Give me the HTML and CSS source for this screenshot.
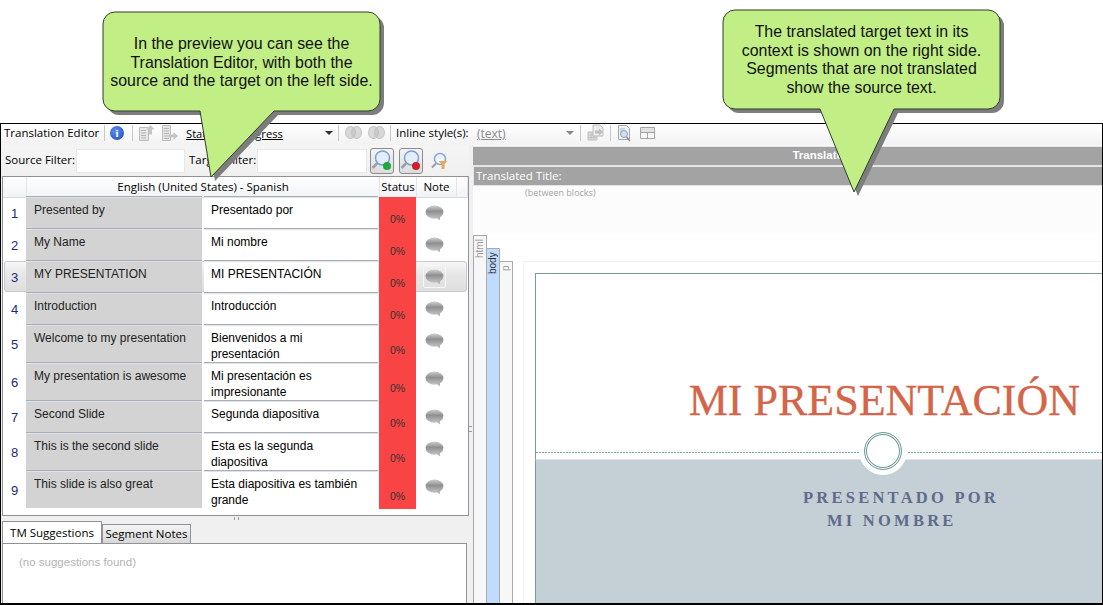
FILE: index.html
```html
<!doctype html>
<html lang="en">
<head>
<meta charset="UTF-8">
<title>Translation Editor</title>
<link rel="stylesheet" href="styles.css">
</head>
<body>
<svg class="defs" width="0" height="0">
 <defs>
  <linearGradient id="bubble" x1="0" y1="0" x2="0" y2="1">
   <stop offset="0" stop-color="#cfcfcf"/><stop offset="0.45" stop-color="#8f8f8f"/><stop offset="1" stop-color="#c4c4c4"/>
  </linearGradient>
  <symbol id="note" viewBox="0 0 20 17">
   <ellipse cx="10" cy="7.500" rx="9.500" ry="7" fill="url(#bubble)"/>
   <path d="M12 13l3.500 3.500.5-5z" fill="#b0b0b0"/>
  </symbol>
  <symbol id="docup" viewBox="0 0 17 17">
   <path d="M1.500 3.500h9v13h-9z" fill="#e6e6e6" stroke="#bcbcbc"/>
   <path d="M3 6.500h5M3 9h5M3 11.500h5M3 14h5" stroke="#b5b5b5"/>
   <path d="M12.500 1l4 4.500h-2.500v5h-3v-5H8.500z" fill="#c6c6c6"/>
  </symbol>
  <symbol id="docright" viewBox="0 0 17 17">
   <path d="M1.500 1.500h8v15h-8z" fill="#e6e6e6" stroke="#bcbcbc"/>
   <path d="M3 4.500h5M3 7h5M3 9.500h5M3 12h5M3 14.500h5" stroke="#b5b5b5"/>
   <path d="M17 12l-4.500 4v-2.500H8v-3h4.500V8z" fill="#c6c6c6"/>
  </symbol>
  <symbol id="lens" viewBox="0 0 24 25">
   <circle cx="12.500" cy="10" r="7" fill="#e4eefb" stroke="#7a9fd8" stroke-width="1.500"/>
   <path d="M7.500 15l-5 5" stroke="#9a9ea6" stroke-width="2.500"/>
  </symbol>
 </defs>
</svg>

<div class="stage">
 <div class="app">

  <div class="toolbar">
   <span class="tb-title">Translation Editor</span>
   <i class="sep"></i>
   <span class="info">i</span>
   <i class="sep"></i>
   <svg class="ic"><use href="#docup"/></svg>
   <svg class="ic ic-b"><use href="#docright"/></svg>
   <span class="status-pick">Status: In Progress</span>
   <i class="caret caret-a"></i>
   <i class="sep"></i>
   <span class="rings"><b></b><b></b></span>
   <span class="rings"><b></b><b></b></span>
   <i class="sep sep-r"></i>
   <span class="tb-label">Inline style(s):</span>
   <span class="style-pick">(text)</span>
   <i class="caret caret-b"></i>
   <i class="sep"></i>
   <svg class="ic ic-c" viewBox="0 0 17 17"><path d="M1 8h9v8H1zM1 11h9M1 13.500h9M4 8v8M7 8v8" fill="#dcdcdc" stroke="#c2c2c2"/><path d="M6 1h7l3 3v8H6z" fill="#ececec" stroke="#bcbcbc"/><path d="M16 8l-4 3.500V9.500H8v-3h4V4.500z" fill="#bdbdbd"/></svg>
   <i class="sep"></i>
   <svg class="ic ic-d" viewBox="0 0 15 18"><path d="M1.500 1.500h8l3 3v11h-11z" fill="#f0f4f8" stroke="#a8a8a8"/><path d="M3 5h5M3 7h2" stroke="#9fb8d0"/><circle cx="7" cy="10" r="3.500" fill="#cfe0f0" stroke="#8aa0b8"/><path d="M9.500 13l3.500 4" stroke="#8a8a8a" stroke-width="1.500"/></svg>
   <svg class="ic ic-e" viewBox="0 0 15 12"><path d="M.5.500h14v11H.5zM.5 5.500h14M7.500 5.500v6" fill="#f6f6f6" stroke="#a4a4a4"/><path d="M1 1h13v4H1z" fill="#e2e2e2"/></svg>
  </div>

  <div class="panes">
   <div class="left">
    <div class="filters">
     <label class="f-label">Source Filter:</label>
     <input class="f-input" type="text">
     <label class="f-label f-target">Target Filter:</label>
     <input class="f-input f-input-b" type="text">
     <span class="f-btn"><svg width="24" height="25"><use href="#lens"/></svg><i class="dot dot-green"></i></span>
     <span class="f-btn f-btn-b"><svg width="24" height="25"><use href="#lens"/></svg><i class="dot dot-red"></i></span>
     <svg class="f-funnel" width="17" height="17" viewBox="0 0 17 17"><circle cx="9" cy="7" r="5.500" fill="#eef4fc" stroke="#86a8dc" stroke-width="1.500"/><path d="M5 11.500l-4 4" stroke="#9a9ea6" stroke-width="2"/><path d="M7.500 9h9l-3 3v5h-3v-5z" fill="#e8a85a"/></svg>
    </div>

    <div class="grid">
     <div class="row head">
      <span class="h-num"></span>
      <span class="h-lang">English (United States) - Spanish</span>
      <span class="h-status">Status</span>
      <span class="h-note">Note</span>
      <span class="h-end"></span>
     </div>
     <div class="row">
      <span class="num">1</span><span class="src">Presented by</span><span class="tgt">Presentado por</span>
      <span class="stat">0%</span><span class="nt"><svg><use href="#note"/></svg></span>
     </div>
     <div class="row">
      <span class="num">2</span><span class="src">My Name</span><span class="tgt">Mi nombre</span>
      <span class="stat">0%</span><span class="nt"><svg><use href="#note"/></svg></span>
     </div>
     <div class="row sel">
      <span class="num">3</span><span class="src">MY PRESENTATION</span><span class="tgt">MI PRESENTACIÓN</span>
      <span class="stat">0%</span><span class="nt"><svg><use href="#note"/></svg></span>
     </div>
     <div class="row">
      <span class="num">4</span><span class="src">Introduction</span><span class="tgt">Introducción</span>
      <span class="stat">0%</span><span class="nt"><svg><use href="#note"/></svg></span>
     </div>
     <div class="row tall">
      <span class="num">5</span><span class="src">Welcome to my presentation</span><span class="tgt">Bienvenidos a mi presentación</span>
      <span class="stat">0%</span><span class="nt"><svg><use href="#note"/></svg></span>
     </div>
     <div class="row tall">
      <span class="num">6</span><span class="src">My presentation is awesome</span><span class="tgt">Mi presentación es impresionante</span>
      <span class="stat">0%</span><span class="nt"><svg><use href="#note"/></svg></span>
     </div>
     <div class="row">
      <span class="num">7</span><span class="src">Second Slide</span><span class="tgt">Segunda diapositiva</span>
      <span class="stat">0%</span><span class="nt"><svg><use href="#note"/></svg></span>
     </div>
     <div class="row tall">
      <span class="num">8</span><span class="src">This is the second slide</span><span class="tgt">Esta es la segunda diapositiva</span>
      <span class="stat">0%</span><span class="nt"><svg><use href="#note"/></svg></span>
     </div>
     <div class="row tall">
      <span class="num">9</span><span class="src">This slide is also great</span><span class="tgt">Esta diapositiva es también grande</span>
      <span class="stat">0%</span><span class="nt"><svg><use href="#note"/></svg></span>
     </div>
    </div>

    <div class="hgrip"><i></i></div>

    <div class="tabs">
     <span class="tab on">TM Suggestions</span>
     <span class="tab">Segment Notes</span>
    </div>
    <div class="tabpanel">(no suggestions found)</div>
   </div>

   <div class="vgrip"><i></i></div>

   <div class="right">
    <div class="titlebar">Translated Title</div>
    <div class="titlefield">Translated Title:</div>
    <div class="between">(between blocks)</div>
    <div class="doc">
     <div class="crumb crumb-html"><span>html</span></div>
     <div class="crumb crumb-body"><span>body</span></div>
     <div class="crumb crumb-p"><span>p</span></div>
     <div class="page">
      <div class="slide">
       <div class="slide-top"><h1 class="slide-title">MI PRESENTACIÓN</h1></div>
       <div class="slide-rule"></div>
       <div class="slide-sub">
        <p class="sub-a">PRESENTADO POR</p>
        <p class="sub-b">MI NOMBRE</p>
       </div>
       <div class="badge"><i></i></div>
      </div>
     </div>
    </div>
   </div>
  </div>
 </div>

 <svg class="callouts" width="1103" height="605" viewBox="0 0 1103 605">
  <path class="c-shadow" d="M115 12H368a12 12 0 0 1 12 12V99a12 12 0 0 1-12 12H274L211 177 200 111H115a12 12 0 0 1-12-12V24a12 12 0 0 1 12-12z"/>
  <path class="c-fill" d="M115 12H368a12 12 0 0 1 12 12V99a12 12 0 0 1-12 12H274L211 177 200 111H115a12 12 0 0 1-12-12V24a12 12 0 0 1 12-12z"/>
  <path class="c-shadow" d="M735 10H988a12 12 0 0 1 12 12V97a12 12 0 0 1-12 12H894L854 192 820 109H735a12 12 0 0 1-12-12V22a12 12 0 0 1 12-12z"/>
  <path class="c-fill" d="M735 10H988a12 12 0 0 1 12 12V97a12 12 0 0 1-12 12H894L854 192 820 109H735a12 12 0 0 1-12-12V22a12 12 0 0 1 12-12z"/>
 </svg>
 <div class="c-text c-one">In the preview you can see the<br>Translation Editor, with both the<br>source and the target on the left side.</div>
 <div class="c-text c-two">The translated target text in its<br>context is shown on the right side.<br>Segments that are not translated<br>show the source text.</div>
</div>
</body>
</html>
```

FILE: styles.css
```css
html, body {
    margin: 0;
    padding: 0;
    background: #fff;
    overflow: hidden;
}
.defs {
    display: block;
    height: 0;
}
.stage {
    position: relative;
    width: 1103px;
    height: 605px;
    padding-top: 123px;
    box-sizing: border-box;
    font-family: "Liberation Sans", Arial, sans-serif;
    color: #000;
}
.app {
    height: 482px;
    box-sizing: border-box;
    border: 1px solid #000;
    border-width: 1px 1px 2px 1px;
    display: flex;
    flex-direction: column;
    background: #f3f3f3;
}

/* top toolbar */
.toolbar {
    height: 21px;
    box-sizing: border-box;
    padding: 0 0 4px 3px;
    flex: none;
    display: flex;
    align-items: center;
    font-family: "Open Sans", sans-serif;
    font-size: 11.5px;
    background: linear-gradient(#fff, #f2f2f2);
}
.tb-title {
    width: 100px;
    white-space: nowrap;
}
.sep {
    width: 1px;
    height: 16px;
    background: #c8c8c8;
    flex: none;
}
.sep-r {
    margin-left: 6px;
}
.info {
    width: 14px;
    height: 14px;
    margin: 0 8px 0 5px;
    border-radius: 50%;
    background: radial-gradient(circle at 40% 35%, #5d8df0, #1a47b8);
    color: #fff;
    font: bold 11px/14px "Liberation Serif", serif;
    text-align: center;
    flex: none;
}
.ic {
    width: 17px;
    height: 17px;
    flex: none;
    margin-left: 5px;
}
.ic-b {
    margin-left: 6px;
}
.status-pick {
    margin: 2px 0 0 8px;
    width: 139px;
    font-size: 11.2px;
    text-decoration: underline;
    white-space: nowrap;
}
.caret {
    width: 0;
    height: 0;
    border: 4px solid transparent;
    border-top: 4px solid #333;
    border-bottom: 0;
    flex: none;
}
.caret-a {
    margin-right: 5px;
}
.caret-b {
    border-top-color: #888;
    margin: 0 6px 0 0;
}
.rings {
    display: flex;
    width: 16px;
    margin-left: 6px;
    flex: none;
}
.rings + .rings {
    margin-left: 7px;
}
.rings b {
    width: 11px;
    height: 13px;
    border: 1px solid #c4c4c4;
    border-radius: 50%;
    background: rgba(190, 190, 190, .55);
    box-sizing: border-box;
    flex: none;
}
.rings b + b {
    margin-left: -5px;
}
.tb-label {
    margin: 0 7px 0 5px;
    width: 74px;
    white-space: nowrap;
}
.style-pick {
    width: 89px;
    margin-top: 2px;
    font-size: 12px;
    color: #8a8a8a;
    text-decoration: underline;
    flex: none;
}
.ic-c {
    margin: 0 6px;
}
.ic-d {
    width: 15px;
    height: 18px;
    margin-left: 6px;
}
.ic-e {
    width: 15px;
    height: 12px;
    margin-left: 8px;
}

.panes {
    flex: 1;
    display: flex;
    min-height: 0;
}
.left {
    width: 468px;
    flex: none;
    display: flex;
    flex-direction: column;
    background: #f0f0f0;
}

/* filter row */
.filters {
    height: 31px;
    flex: none;
    display: flex;
    align-items: center;
    padding-left: 4px;
    font-family: "Open Sans", sans-serif;
    font-size: 11.5px;
    background: linear-gradient(#f5f5f5, #f0f0f0);
}
.f-label {
    width: 71px;
    margin-top: -2px;
    white-space: nowrap;
}
.f-target {
    margin-left: 4px;
    width: 68px;
}
.f-input {
    width: 109px;
    height: 24px;
    box-sizing: border-box;
    border: 1px solid #e8e8e8;
    background: #fff;
    padding: 0;
    outline: 0;
    flex: none;
}
.f-input-b {
    width: 110px;
}
.f-btn {
    position: relative;
    width: 24px;
    height: 26px;
    margin-left: 3px;
    box-sizing: border-box;
    border: 1px solid #8b8b8b;
    border-radius: 3px;
    background: linear-gradient(#f4f4f4, #dcdcdc);
    flex: none;
}
.f-btn svg {
    display: block;
    position: absolute;
    left: -1px;
    top: -1px;
}
.f-btn-b {
    margin-left: 5px;
}
.dot {
    position: absolute;
    right: 2px;
    bottom: 3px;
    width: 8px;
    height: 8px;
    border-radius: 50%;
}
.dot-green {
    background: #1fa83c;
}
.dot-red {
    background: #c8202c;
}
.f-funnel {
    margin-left: 8px;
    flex: none;
}

/* segment grid */
.grid {
    height: 340px;
    flex: none;
    margin-left: 1px;
    width: 467px;
    box-sizing: border-box;
    border: 1px solid #8f9298;
    background: #fff;
    font-size: 12px;
}
.row {
    position: relative;
    display: grid;
    grid-template-columns: 23px 176px 177px 37px 1fr;
    height: 32px;
}
.row.tall {
    height: 38px;
}
.row.head {
    height: 20px;
    grid-template-columns: 24px 353px 37px 40px 1fr;
    font-family: "Open Sans", sans-serif;
    font-size: 11.5px;
    line-height: 20px;
    text-align: center;
    background: linear-gradient(#fff, #f1f3f6);
}
.head span {
    border-right: 1px solid #e3e5ea;
    border-bottom: 1px solid #d5d8de;
    white-space: nowrap;
}
.num {
    padding-top: 9px;
    font-size: 13px;
    color: #1a2a80;
    text-align: center;
}
.tall .num {
    padding-top: 12px;
}
.src, .tgt {
    padding: 5px 4px 0 8px;
    line-height: 16px;
    border-top: 1px solid #a9adb8;
    box-sizing: border-box;
    margin-top: -1px;
    margin-bottom: 1px;
    box-shadow: inset 0 1px 0 #dfe2e8;
}
.src {
    background: #d3d3d3;
    color: #222;
}
.tgt {
    background: #fff;
    margin-left: 2px;
    margin-right: 1px;
    padding-left: 7px;
    padding-right: 20px;
}
.stat {
    background: #f84444;
    font-size: 10.5px;
    color: #333;
    text-align: center;
    padding-top: 16px;
    box-sizing: border-box;
}
.tall .stat {
    padding-top: 19px;
}
.nt svg {
    display: block;
    width: 19px;
    height: 16px;
    margin: 8px 0 0 9px;
}
.sel {
    z-index: 1;
}
.sel::before {
    content: "";
    position: absolute;
    left: 1px;
    right: 1px;
    top: 0;
    bottom: 1px;
    border: 1px solid #c9c9c9;
    border-radius: 3px;
    background: linear-gradient(#f7f7f7, #e6e6e6 45%, #dedede);
}
.sel span {
    position: relative;
}
.sel .nt::before {
    content: "";
    position: absolute;
    left: 7px;
    top: 4px;
    width: 23px;
    height: 23px;
    box-sizing: border-box;
    border: 1px solid #f6f6f6;
    border-radius: 2px;
}

.hgrip {
    height: 5px;
    flex: none;
    display: flex;
    justify-content: center;
}
.hgrip i {
    display: block;
    width: 3px;
    height: 3px;
    margin: 1px 0 0 3px;
    border: 1px solid #999;
    border-width: 0 1px;
}
.tabs {
    height: 22px;
    flex: none;
    display: flex;
    align-items: flex-end;
    padding-left: 1px;
    font-family: "Open Sans", sans-serif;
    font-size: 11.5px;
}
.tab {
    height: 19px;
    line-height: 18px;
    width: 89px;
    box-sizing: border-box;
    text-align: center;
    border: 1px solid #8f9298;
    border-bottom: 0;
    background: linear-gradient(#f4f4f4, #d8d8d8);
    white-space: nowrap;
}
.tab.on {
    height: 22px;
    line-height: 21px;
    width: 100px;
    background: #fff;
}
.tabpanel {
    flex: 1;
    margin: 0 0 0 1px;
    width: 465px;
    box-sizing: border-box;
    border: 1px solid #8f9298;
    border-bottom: 0;
    background: #fff;
    padding: 12px 0 0 16px;
    font-size: 11.5px;
    color: #b4b4b4;
}

.vgrip {
    width: 4px;
    flex: none;
    background: #f0f0f0;
    position: relative;
}
.vgrip i {
    position: absolute;
    left: 0;
    top: 281px;
    width: 3px;
    height: 4px;
    border-top: 1px solid #999;
    border-bottom: 1px solid #999;
}

/* preview pane */
.right {
    flex: 1;
    min-width: 0;
    display: flex;
    flex-direction: column;
    background: #fcfcfc;
    overflow: hidden;
}
.titlebar {
    height: 18px;
    margin-top: 1px;
    padding-left: 94px;
    flex: none;
    background: #a3a3a3;
    border: 1px solid #e4e4e4;
    border-width: 1px 0;
    color: #fff;
    font-size: 11.5px;
    font-weight: bold;
    line-height: 17px;
    text-align: center;
}
.titlefield {
    height: 20px;
    flex: none;
    box-sizing: border-box;
    background: #a3a3a3;
    border: 1px solid #e4e4e4;
    border-width: 1px 0 1px 1px;
    color: #fff;
    font-family: "Open Sans", sans-serif;
    font-size: 11.5px;
    line-height: 18px;
    padding-left: 2px;
}
.between {
    height: 47px;
    flex: none;
    box-sizing: border-box;
    padding: 0 0 0 52px;
    font-family: "Open Sans", sans-serif;
    font-size: 9px;
    color: #a5a5a5;
}
.doc {
    position: relative;
    flex: 1;
    min-height: 0;
    display: flex;
    background: #fff;
}
.crumb {
    width: 13px;
    box-sizing: border-box;
    flex: none;
    border: 1px solid #aaa;
    border-bottom: 0;
    background: #f7f7f7;
    font-size: 10px;
    color: #999;
}
.crumb span {
    display: block;
    writing-mode: vertical-rl;
    transform: rotate(180deg);
    height: 30px;
    line-height: 11px;
    text-align: right;
    margin-top: 3px;
}
.crumb-html {
    margin-top: 2px;
    width: 14px;
}
.crumb-body {
    margin-top: 15px;
    background: #bfdcff;
    color: #333;
    border-left: 0;
    width: 13px;
}
.crumb-p {
    margin-top: 28px;
    border-left: 0;
}
.page {
    flex: 1;
    min-width: 0;
    padding: 28px 0 0 10px;
}
.slide {
    position: relative;
    height: 500px;
    border-top: 1px solid #f0f0f0;
    padding-top: 11px;
    box-sizing: border-box;
    background: linear-gradient(90deg, #f2f2f2 1px, transparent 1px);
}
.slide-top {
    margin-left: 12px;
    height: 179px;
    box-sizing: border-box;
    padding: 102px 22px 0 0;
    border: 1px solid #7a9a9a;
    border-width: 1px 0 0 1px;
    text-align: right;
}
.slide-title {
    margin: 0;
    font: normal 44px/50px "Liberation Serif", serif;
    -webkit-text-stroke: .3px #d36548;
    color: #d36548;
    white-space: nowrap;
}
.slide-rule {
    margin-left: 12px;
    height: 7px;
    border-left: 1px solid #7a9a9a;
    background: linear-gradient(90deg, #7fa3a3 60%, transparent 60%) 0 0 / 3px 1px repeat-x;
}
.slide-sub {
    margin-left: 12px;
    height: 200px;
    border-left: 1px solid #7a9a9a;
    border-top: 1px solid #dde2e5;
    background: #c4cfd6;
    box-sizing: border-box;
    padding-top: 26px;
    color: #5f6b8a;
    font: bold 16.5px/23px "Liberation Serif", serif;
    letter-spacing: 3.25px;
}
.slide-sub p {
    margin: 0;
}
.sub-a {
    padding-left: 267px;
}
.sub-b {
    padding-left: 291px;
}
.badge {
    position: absolute;
    left: 336px;
    top: 165px;
    width: 48px;
    height: 48px;
    box-sizing: border-box;
    border-radius: 50%;
    background: #fff;
    padding: 5px;
}
.badge i {
    display: block;
    width: 38px;
    height: 38px;
    box-sizing: border-box;
    border-radius: 50%;
    border: 1px solid #6f9b9b;
    box-shadow: inset 0 0 0 1px #fff, inset 0 0 0 2px #6f9b9b;
}

/* callouts */
.callouts {
    position: absolute;
    left: 0;
    top: 0;
}
.c-shadow {
    fill: #7d7d7d;
    transform: translate(4px, 4px);
}
.c-fill {
    fill: #c2ee86;
    stroke: #2f3f2a;
    stroke-width: 1;
}
.c-text {
    position: absolute;
    font-size: 15.9px;
    line-height: 18.6px;
    text-align: center;
    color: #111;
    white-space: nowrap;
}
.c-one {
    left: 103px;
    top: 35px;
    width: 277px;
}
.c-two {
    left: 723px;
    top: 23px;
    width: 277px;
}
```
